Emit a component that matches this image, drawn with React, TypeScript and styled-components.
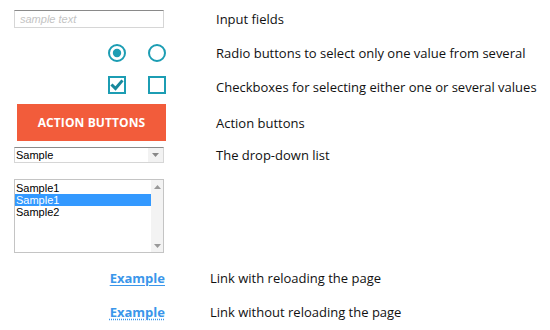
import React from "react";
import styled, { createGlobalStyle } from "styled-components";

const Global = createGlobalStyle`
  html, body { margin: 0; padding: 0; background: #fff; }
  body { font-family: "Open Sans", "Liberation Sans", sans-serif; color: #111; }
`;

const TEAL = "#1c9db3";

const Page = styled.div`
  padding: 2px 0 0 14px;
  display: flex;
  flex-direction: column;
`;

const Row = styled.div<{ $h?: number; $labelShift?: number; $pad?: string }>`
  display: grid;
  grid-template-columns: 152px 1fr;
  column-gap: ${(p) => 50 + (p.$labelShift ?? 0)}px;
  align-items: ${(p) => (p.$pad ? "start" : "center")};
  height: ${(p) => (p.$h ? `${p.$h}px` : "auto")};
  padding: ${(p) => p.$pad ?? "0"};
`;

const Label = styled.span`
  font-size: 13px;
  line-height: 16px;
  color: #111;
  white-space: nowrap;
`;

const TextInput = styled.input`
  box-sizing: border-box;
  width: 150px;
  height: 18px;
  border: 1px solid #d6d6d6;
  border-top-color: #8a8a8a;
  padding: 0 5px;
  font-family: "Liberation Sans", Arial, sans-serif;
  font-size: 11px;
  outline: none;
  &::placeholder { color: #c4c4c4; font-style: italic; }
`;

const Pair = styled.div<{ $shift?: number }>`
  justify-self: end;
  display: flex;
  gap: 22px;
  margin-top: ${(p) => p.$shift ?? 0}px;
`;

const ActionButton = styled.button`
  box-sizing: border-box;
  margin-left: 3px;
  width: 149px;
  height: 37px;
  border: none;
  background: #f25c3b;
  color: #fff;
  font-family: "Open Sans", "Liberation Sans", sans-serif;
  font-weight: 700;
  font-size: 12px;
  letter-spacing: 0.1px;
  padding: 0;
`;

const SelectBox = styled.div`
  box-sizing: border-box;
  width: 150px;
  height: 16px;
  border: 1px solid #d6d6d6;
  border-top-color: #8a8a8a;
  display: flex;
  align-items: center;
  font-family: "Liberation Sans", Arial, sans-serif;
  font-size: 11px;
  color: #000;
`;

const SelectText = styled.span`
  flex: 1;
  padding-left: 1px;
  line-height: 14px;
`;

const ArrowCell = styled.span`
  width: 15px;
  height: 14px;
  background: #f2f2f2;
  display: flex;
  align-items: center;
  justify-content: center;
`;

const ListBox = styled.div`
  box-sizing: border-box;
  width: 150px;
  height: 74px;
  border: 1px solid #c4c4c4;
  display: flex;
  font-family: "Liberation Sans", Arial, sans-serif;
  font-size: 11px;
`;

const ListItems = styled.div`
  flex: 1;
  padding-top: 2px;
`;

const ListItem = styled.div<{ $sel?: boolean }>`
  height: 12px;
  line-height: 12px;
  padding-left: 1px;
  background: ${(p) => (p.$sel ? "#3399ff" : "transparent")};
  color: ${(p) => (p.$sel ? "#fff" : "#000")};
`;

const ScrollBar = styled.div`
  width: 12px;
  background: #f3f3f3;
  display: flex;
  flex-direction: column;
  justify-content: space-between;
  align-items: center;
  padding: 5px 0 4px;
`;

const LinkText = styled.a<{ $dotted?: boolean }>`
  justify-self: end;
  margin-right: 1px;
  font-size: 13px;
  font-weight: 700;
  color: #3a96ea;
  text-decoration: underline;
  text-decoration-style: ${(p) => (p.$dotted ? "dotted" : "solid")};
  text-underline-offset: 2px;
  cursor: pointer;
  line-height: 16px;
`;

const Tri = ({ up, color = "#888" }: { up?: boolean; color?: string }) => (
  <svg width="7" height="4" viewBox="0 0 7 4">
    <polygon points={up ? "0,4 7,4 3.5,0" : "0,0 7,0 3.5,4"} fill={color} />
  </svg>
);

const Radio = ({ on }: { on?: boolean }) => (
  <svg width="18" height="18" viewBox="0 0 18 18">
    <circle cx="9" cy="9" r="8" fill="none" stroke={TEAL} strokeWidth="2" />
    {on && <circle cx="9" cy="9" r="4.2" fill={TEAL} />}
  </svg>
);

const Check = ({ on }: { on?: boolean }) => (
  <svg width="18" height="18" viewBox="0 0 18 18">
    <rect x="1" y="1" width="16" height="16" fill="none" stroke={TEAL} strokeWidth="2" />
    {on && (
      <polyline
        points="4.5,9.5 7.5,12.5 13.5,5.5"
        fill="none"
        stroke="#17889c"
        strokeWidth="3"
        strokeLinecap="square"
      />
    )}
  </svg>
);

export default function App() {
  return (
    <>
      <Global />
      <Page>
        <Row $h={34}>
          <TextInput placeholder="sample text" />
          <Label>Input fields</Label>
        </Row>
        <Row $h={34}>
          <Pair>
            <Radio on />
            <Radio />
          </Pair>
          <Label>Radio buttons to select only one value from several</Label>
        </Row>
        <Row $h={34}>
          <Pair $shift={-4}>
            <Check on />
            <Check />
          </Pair>
          <Label>Checkboxes for selecting either one or several values</Label>
        </Row>
        <Row $h={34}>
          <ActionButton>ACTION BUTTONS</ActionButton>
          <Label>Action buttons</Label>
        </Row>
        <Row $h={34}>
          <SelectBox>
            <SelectText>Sample</SelectText>
            <ArrowCell>
              <Tri />
            </ArrowCell>
          </SelectBox>
          <Label>The drop-down list</Label>
        </Row>
        <Row $pad="7px 0 8px">
          <ListBox>
            <ListItems>
              <ListItem>Sample1</ListItem>
              <ListItem $sel>Sample1</ListItem>
              <ListItem>Sample2</ListItem>
            </ListItems>
            <ScrollBar>
              <Tri up color="#999" />
              <Tri color="#999" />
            </ScrollBar>
          </ListBox>
          <span />
        </Row>
        <Row $h={34} $labelShift={-6}>
          <LinkText>Example</LinkText>
          <Label>Link with reloading the page</Label>
        </Row>
        <Row $h={34} $labelShift={-6}>
          <LinkText $dotted>Example</LinkText>
          <Label>Link without reloading the page</Label>
        </Row>
      </Page>
    </>
  );
}
